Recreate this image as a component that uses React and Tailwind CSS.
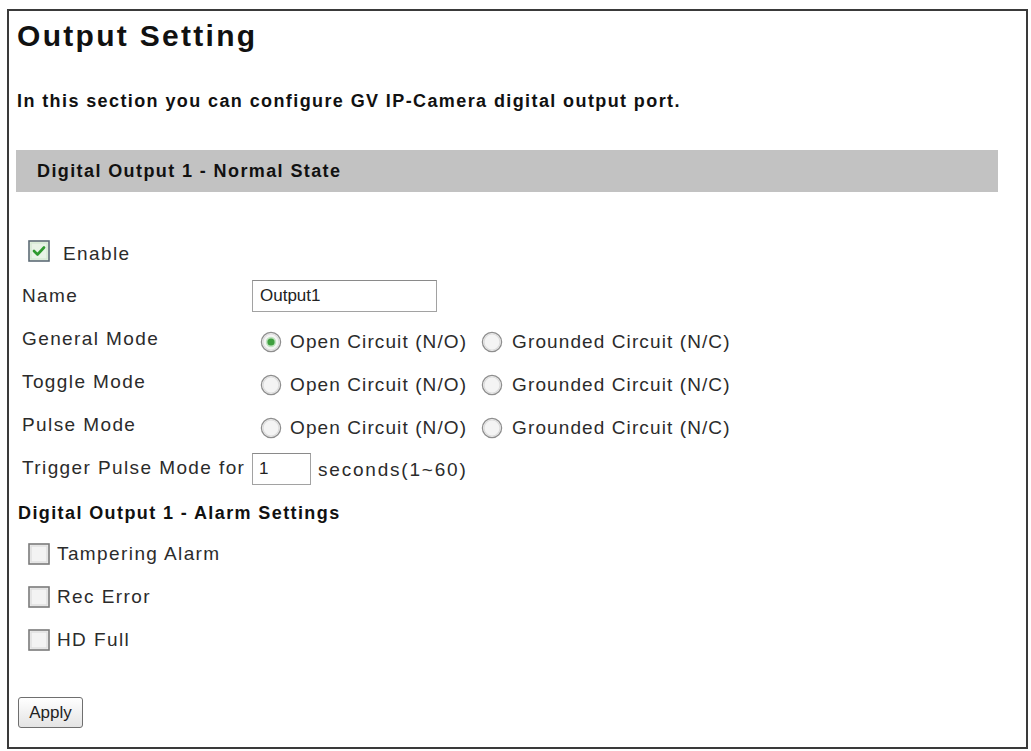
import React from "react";

const FONT = "font-['Liberation_Sans',Arial,sans-serif]";
const LABEL = "text-[19px] tracking-[1.4px] text-[#2b2b2b] leading-none whitespace-nowrap";
const OPT = "text-[19px] tracking-[1.1px] text-[#2b2b2b] leading-none whitespace-nowrap";
const BOLD = "font-bold text-[18px] tracking-[1.4px] text-[#111] leading-[20px] whitespace-nowrap";

function Radio({ checked = false, className = "" }) {
  return (
    <svg width="22" height="22" viewBox="0 0 22 22" className={"shrink-0 " + className}>
      <circle cx="11" cy="11" r="9.6" fill="#f4f4f4" stroke="#8e8e8e" strokeWidth="1.3" />
      <circle cx="11" cy="11" r="8" fill="none" stroke="#dcdcdc" strokeWidth="1.2" />
      {checked && (
        <>
          <circle cx="11" cy="11" r="5.2" fill="#bfe3bf" />
          <circle cx="11" cy="11" r="3.6" fill="#3f9f3f" />
        </>
      )}
    </svg>
  );
}

function Check({ checked = false, className = "" }) {
  return (
    <svg width="22" height="22" viewBox="0 0 22 22" className={"shrink-0 " + className}>
      <rect x="1" y="1" width="20" height="20" fill={checked ? "#e8f3e6" : "#f3f3f3"} stroke={checked ? "#5d6b76" : "#7a7a7a"} strokeWidth="1.6" />
      <rect x="3" y="3" width="16" height="16" fill="none" stroke={checked ? "#d3e8d0" : "#dddddd"} strokeWidth="1.2" />
      {checked && (
        <path d="M6 11 L9.5 14.5 L16 7.5" fill="none" stroke="#2e9a2e" strokeWidth="2.6" strokeLinecap="round" strokeLinejoin="round" />
      )}
    </svg>
  );
}

function ModeRow({ label, checked }) {
  return (
    <div className="flex h-[43px] items-center">
      <div className={"w-[243px] pl-[13px] " + LABEL}>{label}</div>
      <div className="flex items-center pt-[6px]">
        <Radio checked={checked} className="ml-[8px]" />
        <span className={"ml-[8px] " + OPT}>Open Circuit (N/O)</span>
        <Radio className="ml-[14px]" />
        <span className={"ml-[9px] " + OPT}>Grounded Circuit (N/C)</span>
      </div>
    </div>
  );
}

function AlarmRow({ label }) {
  return (
    <div className="flex h-[43px] items-center">
      <Check className="ml-[19px]" />
      <span className={"ml-[7px] " + LABEL}>{label}</span>
    </div>
  );
}

export default function App() {
  return (
    <div className={"min-h-[751px] w-[1031px] bg-white pt-[9px] " + FONT}>
      <div className="ml-[7px] flex h-[740px] w-[1021px] flex-col border-2 border-[#3a3a3a] bg-white">
        <h1 className="mt-[10px] pl-[8px] text-[30px] font-bold leading-[30px] tracking-[2.3px] text-[#111]">
          Output Setting
        </h1>
        <p className={"mt-[40px] pl-[8px] " + BOLD}>
          In this section you can configure GV IP-Camera digital output port.
        </p>
        <div className="mt-[39px] ml-[7px] mr-[28px] flex h-[42px] items-center bg-[#c2c2c2] pl-[21px]">
          <span className={BOLD}>Digital Output 1 - Normal State</span>
        </div>

        <div className="mt-[39px] flex flex-col">
          <div className="flex h-[43px] items-center">
            <Check checked className="ml-[19px] -mt-[3px]" />
            <span className={"ml-[13px] pt-[2px] " + LABEL}>Enable</span>
          </div>
          <div className="flex h-[43px] items-center">
            <div className={"w-[243px] pl-[13px] " + LABEL}>Name</div>
            <input
              readOnly
              value="Output1"
              className={"h-[32px] w-[185px] border border-[#a2a2a2] border-t-[#8a8a8a] bg-white pl-[7px] text-[17px] text-[#222] outline-none " + FONT}
            />
          </div>
          <ModeRow label="General Mode" checked />
          <ModeRow label="Toggle Mode" />
          <ModeRow label="Pulse Mode" />
          <div className="flex h-[43px] items-center">
            <div className={"w-[243px] pl-[13px] " + LABEL}>Trigger Pulse Mode for</div>
            <input
              readOnly
              value="1"
              className={"mt-[3px] h-[32px] w-[59px] border border-[#a2a2a2] border-t-[#8a8a8a] bg-white pl-[6px] text-[17px] text-[#222] outline-none " + FONT}
            />
            <span className={"ml-[7px] pt-[4px] text-[19px] tracking-[1.8px] text-[#2b2b2b] leading-none whitespace-nowrap"}>seconds(1~60)</span>
          </div>
          <div className="flex h-[43px] items-center pt-[4px] pl-[9px]">
            <span className={BOLD}>Digital Output 1 - Alarm Settings</span>
          </div>
          <AlarmRow label="Tampering Alarm" />
          <AlarmRow label="Rec Error" />
          <AlarmRow label="HD Full" />
        </div>

        <div className="mt-[36px] pl-[9px]">
          <button
            type="button"
            className={"flex h-[31px] w-[65px] items-center justify-center rounded-[3px] border border-[#6f6f6f] bg-gradient-to-b from-[#ffffff] to-[#e4e4e4] text-[17px] text-[#222] " + FONT}
          >
            Apply
          </button>
        </div>
      </div>
    </div>
  );
}
